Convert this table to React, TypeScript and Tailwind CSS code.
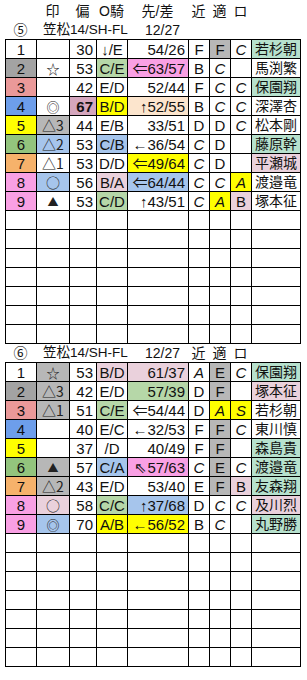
type Cell = { t?: string; bg?: string; b?: boolean };
type Row = Cell[];

const W = ["w-[31px]", "w-[33px]", "w-[27px]", "w-[31px]", "w-[61px]", "w-[21px]", "w-[21px]", "w-[21px]", "w-[49px]"];

const GRAY = "bg-[#a3a3a3]";
const LG = "bg-[#b7b7b7]";
const SAL = "bg-[#ea9999]";
const BLU = "bg-[#6d9eeb]";
const YEL = "bg-[#ffff00]";
const GRN = "bg-[#93c47d]";
const ORG = "bg-[#f6b26b]";
const PNK = "bg-[#f9a0e4]";
const LB = "bg-[#a6c5ec]";
const LP = "bg-[#ead1dc]";
const LGR = "bg-[#b6d7a8]";
const NG = "bg-[#b7e1cd]";
const PCH = "bg-[#fce5cd]";
const MV = "bg-[#d5a6bd]";

const c = (t?: string, bg?: string, b?: boolean): Cell => ({ t, bg, b });

const table1: Row[] = [
  [c("1"), c(), c("30"), c("↓/E"), c("54/26"), c("F"), c("F", LG), c("C"), c("若杉朝", NG)],
  [c("2", GRAY), c("☆"), c("53"), c("C/E", LGR), c("⇐63/57", PNK), c("B"), c("C"), c(), c("馬渕繁")],
  [c("3", SAL), c(), c("42"), c("E/D"), c("52/44"), c("F"), c("C"), c("C"), c("保園翔", NG)],
  [c("4", BLU), c("◎"), c("67", MV, true), c("B/D", YEL), c("↑52/55", PCH), c("B"), c("C"), c("C"), c("深澤杏")],
  [c("5", YEL), c("△3", LG), c("44"), c("E/B"), c("33/51"), c("D"), c("D"), c("C"), c("松本剛")],
  [c("6", GRN), c("△2", LB), c("53"), c("C/B", LB), c("←36/54"), c("C"), c("D"), c(), c("藤原幹", NG)],
  [c("7", ORG), c("△1"), c("53"), c("D/D"), c("⇐49/64", YEL), c("C"), c("D"), c(), c("平瀬城", LP)],
  [c("8", PNK), c("○", LB), c("56"), c("B/A", LP), c("⇐64/44", LB), c("C"), c("C"), c("A", YEL), c("渡邉竜")],
  [c("9", PNK), c("▲"), c("53"), c("C/D", LGR), c("↑43/51"), c("C"), c("A", YEL), c("B", LP), c("塚本征")],
];

const table2: Row[] = [
  [c("1"), c("☆", LG), c("53"), c("B/D", LP), c("61/37", LP), c("A"), c("E", LG), c("C"), c("保園翔", NG)],
  [c("2", GRAY), c("△3", LG), c("42"), c("E/D"), c("57/39", LGR), c("D"), c("F", LG), c(), c("塚本征", LP)],
  [c("3", SAL), c("△1", LG), c("51"), c("C/E", LGR), c("⇐54/44"), c("D"), c("A", YEL), c("S", YEL), c("若杉朝")],
  [c("4", BLU), c(), c("40"), c("E/C"), c("←32/53"), c("F"), c("F", LG), c("C"), c("東川慎")],
  [c("5", YEL), c(), c("37"), c("/D"), c("40/49"), c("F"), c("F", LG), c(), c("森島貴", NG)],
  [c("6", GRN), c("▲", LG), c("57"), c("C/A", LB), c("⇖57/63", PNK), c("C"), c("E", LG), c("C"), c("渡邉竜", NG)],
  [c("7", ORG), c("△2", LG), c("43"), c("E/D"), c("53/40"), c("E"), c("F", LG), c("B", LP), c("友森翔", NG)],
  [c("8", PNK), c("○", LP), c("58"), c("C/C", LGR), c("↑37/68", LB), c("D"), c("C"), c("C"), c("及川烈", LP)],
  [c("9", PNK), c("◎", LB), c("70"), c("A/B", YEL), c("←56/52", YEL), c("B"), c("C"), c(), c("丸野勝", NG)],
];

const align = (i: number) => {
  if (i === 2 || i === 4) return "justify-end pr-[3px]";
  return "justify-center";
};

// marks in the 印 column are drawn at slightly different sizes
const markSize = (t?: string) => {
  if (t === "▲") return "text-[11px]";
  if (t === "◎" || t === "☆") return "text-[13px]";
  return "text-[14px]";
};

const Sheet = ({ rows }: { rows: Row[] }) => {
  const all = [...rows, ...Array.from({ length: 16 - rows.length }, () => Array.from({ length: 9 }, () => c()))];
  return (
    <div className="ml-[5px] flex w-[296px] flex-col border-l border-t border-black">
      {all.map((row, r) => (
        <div key={r} className="flex h-[19px]">
          {row.map((cell, i) => (
            <div
              key={i}
              className={`${W[i]} ${cell.bg ?? "bg-white"} ${align(i)} flex shrink-0 items-center whitespace-nowrap border-b border-r border-black leading-none ${
                i === 1 ? `font-['Noto_Sans_CJK_JP',sans-serif] text-[#222] ${markSize(cell.t)}` : i === 8 ? "text-[14px]" : "text-[15px]"
              } ${cell.b ? "font-bold" : ""} ${
                i >= 5 && i <= 7 && (cell.t === "C" || cell.t === "A" || cell.t === "S") ? "italic" : ""
              }`}
            >
              {cell.t}
            </div>
          ))}
        </div>
      ))}
    </div>
  );
};

const Title = ({ no, withGrades }: { no: string; withGrades?: boolean }) => (
  <div className="flex items-center whitespace-nowrap pl-[5px] leading-none">
    <span className="w-[31px] shrink-0 text-center">{no}</span>
    <span className="w-[91px] shrink-0 pl-[7px] text-[13.5px]">笠松14/SH-FL</span>
    <span className="w-[61px] shrink-0 pl-[18px]">12/27</span>
    {withGrades && (
      <>
        <span className="w-[21px] shrink-0 text-center">近</span>
        <span className="w-[21px] shrink-0 text-center">適</span>
        <span className="w-[21px] shrink-0 text-center">ロ</span>
      </>
    )}
  </div>
);

export default function App() {
  return (
    <div className="h-[680px] w-[307px] bg-white font-['Liberation_Sans','Noto_Sans_CJK_JP',sans-serif] text-[14px] text-[#111]">
      <div className="flex h-[20px] items-center whitespace-nowrap pl-[5px] pt-[2px] leading-none">
        <span className="w-[31px] shrink-0" />
        <span className="w-[33px] shrink-0 text-center">印</span>
        <span className="w-[27px] shrink-0 text-center">偏</span>
        <span className="w-[31px] shrink-0 text-center">O騎</span>
        <span className="w-[61px] shrink-0 text-center">先/差</span>
        <span className="w-[21px] shrink-0 text-center">近</span>
        <span className="w-[21px] shrink-0 text-center">適</span>
        <span className="w-[21px] shrink-0 text-center">ロ</span>
      </div>
      <div className="flex h-[19px] items-center">
        <Title no="⑤" />
      </div>
      <Sheet rows={table1} />
      <div className="flex h-[18px] items-center">
        <Title no="⑥" withGrades />
      </div>
      <Sheet rows={table2} />
    </div>
  );
}
